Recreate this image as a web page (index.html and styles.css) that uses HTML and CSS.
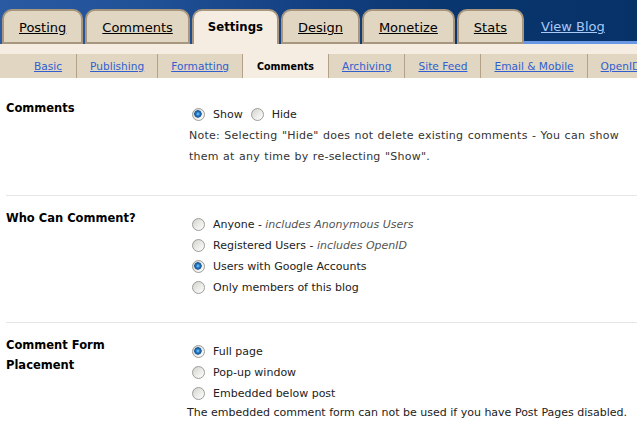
FILE: index.html
```html
<!DOCTYPE html>
<html>
<head>
<meta charset="utf-8">
<title>Settings - Comments</title>
<link rel="stylesheet" href="styles.css">
</head>
<body>
<header class="topbar">
  <nav class="tabs">
    <a class="tab" href="#">Posting</a>
    <a class="tab" href="#">Comments</a>
    <a class="tab tab-active" href="#">Settings</a>
    <a class="tab" href="#">Design</a>
    <a class="tab" href="#">Monetize</a>
    <a class="tab" href="#">Stats</a>
    <div class="viewblog"><a href="#">View Blog</a></div>
  </nav>
</header>
<div class="band"></div>
<nav class="subnav">
  <a class="sub" href="#">Basic</a>
  <a class="sub" href="#">Publishing</a>
  <a class="sub" href="#">Formatting</a>
  <span class="sub sub-active">Comments</span>
  <a class="sub" href="#">Archiving</a>
  <a class="sub" href="#">Site Feed</a>
  <a class="sub" href="#">Email &amp; Mobile</a>
  <a class="sub" href="#">OpenID</a>
</nav>
<main class="content">
  <section class="row row-first">
    <div class="label">Comments</div>
    <div class="field">
      <div class="inline">
        <label class="opt"><input class="radio" type="radio" name="c" checked>Show</label>
        <label class="opt"><input class="radio" type="radio" name="c">Hide</label>
      </div>
      <p class="note">Note: Selecting "Hide" does not delete existing comments - You can show them at any time by re-selecting "Show".</p>
    </div>
  </section>
  <section class="row">
    <div class="label">Who Can Comment?</div>
    <div class="field">
      <label class="opt"><input class="radio" type="radio" name="w">Anyone - <em>includes Anonymous Users</em></label>
      <label class="opt"><input class="radio" type="radio" name="w">Registered Users - <em>includes OpenID</em></label>
      <label class="opt"><input class="radio" type="radio" name="w" checked>Users with Google Accounts</label>
      <label class="opt"><input class="radio" type="radio" name="w">Only members of this blog</label>
    </div>
  </section>
  <section class="row row-last">
    <div class="label">Comment Form<br>Placement</div>
    <div class="field">
      <label class="opt"><input class="radio" type="radio" name="p" checked>Full page</label>
      <label class="opt"><input class="radio" type="radio" name="p">Pop-up window</label>
      <label class="opt"><input class="radio" type="radio" name="p">Embedded below post</label>
      <p class="hint">The embedded comment form can not be used if you have Post Pages disabled.</p>
    </div>
  </section>
</main>
</body>
</html>
```
FILE: styles.css
```css
* { box-sizing: border-box; }
html, body { margin: 0; padding: 0; }
body {
  width: 637px;
  height: 430px;
  overflow: hidden;
  background: #fff;
  font-family: "DejaVu Sans", Verdana, sans-serif;
  font-size: 11px;
  color: #222;
}

.topbar {
  height: 44px;
  background: linear-gradient(90deg, #2a5ba2 0%, #1f4f95 25%, #123f80 50%, #0a366f 70%, #063268 100%);
}
.tabs {
  display: flex;
  align-items: flex-end;
  height: 44px;
  padding-left: 2px;
}
.tab {
  display: flex;
  align-items: center;
  height: 35px;
  margin-right: 2px;
  padding: 2px 15px 0;
  background: #e1d6c2;
  border: 2px solid #a8967e;
  border-radius: 10px 10px 0 0;
  color: #000;
  font-size: 13px;
  text-decoration: underline;
}
.tab-active {
  background: #f5ede2;
  border-bottom: none;
  padding: 0 14px 2px;
  font-weight: bold;
  font-stretch: condensed;
  text-decoration: none;
}
.viewblog {
  flex: 1;
  align-self: stretch;
  display: flex;
  align-items: flex-end;
  padding: 0 0 7px 17px;
  margin-left: -2px;
  border-bottom: 3px solid #6a98e4;
}
.viewblog a {
  color: #a9c9f7;
  font-size: 13px;
}

.band {
  height: 10px;
  background: #f5ede2;
}
.subnav {
  display: flex;
  height: 24px;
  background: #e1d6c2;
  padding-left: 21px;
  font-size: 10.6px;
  white-space: nowrap;
}
.sub {
  display: flex;
  align-items: center;
  padding: 0 13px 1px;
  color: #3060d0;
  border-right: 1px solid #b3a189;
}
.sub:first-child { padding-right: 14px; }
.sub-active {
  background: #f5ede2;
  color: #000;
  font-weight: bold;
  font-stretch: condensed;
  padding: 0 14px 1px;
}

.content {
  padding: 8px 0 0 6px;
}
.row {
  display: grid;
  grid-template-columns: 183px 1fr;
  padding: 12px 0 24px;
  border-bottom: 1px solid #e6e6e6;
}
.row-last { border-bottom: none; }
.label {
  font-weight: bold;
  font-size: 11.5px;
  color: #000;
  line-height: 20px;
}
.field {
  padding-top: 6px;
  color: #222;
}
.inline { display: flex; gap: 5px; }
.opt {
  display: flex;
  align-items: center;
  height: 21px;
  white-space: nowrap;
}
.opt em {
  color: #555;
  margin-left: 0.3em;
}
.radio {
  appearance: none;
  -webkit-appearance: none;
  width: 13px;
  height: 13px;
  margin: 0 8px 0 3px;
  border: 1px solid #9c9c98;
  border-radius: 50%;
  background: linear-gradient(135deg, #d2d2cc 0%, #ececea 55%, #fff 100%);
}
.radio:checked {
  background:
    radial-gradient(circle at 45% 45%, #8fd4f5 0, #2f86cf 1.6px, #0f4f90 3.4px, rgba(15,79,144,0) 4px),
    linear-gradient(135deg, #d2d2cc 0%, #ececea 55%, #fff 100%);
}
.note {
  margin: 0 0 4px;
  padding-right: 6px;
  line-height: 21px;
  color: #333;
  letter-spacing: 0.25px;
  word-spacing: 0.6px;
}
.hint {
  margin: 0 0 0 -2px;
  line-height: 18px;
  color: #222;
  white-space: nowrap;
}
```
